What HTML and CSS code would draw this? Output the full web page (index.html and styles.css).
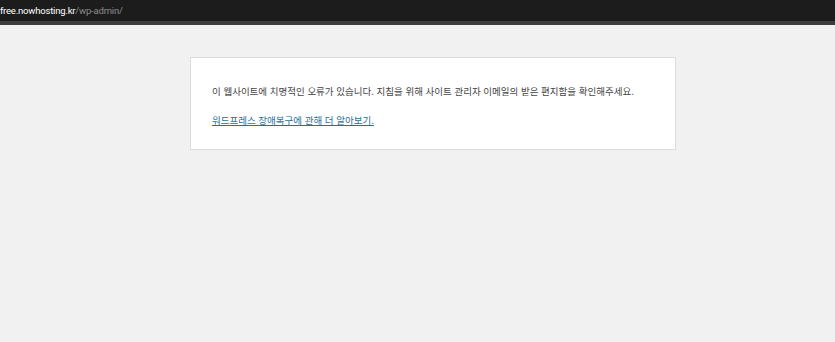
FILE: index.html
```html
<!DOCTYPE html>

<html lang="ko">
    <head>
        <meta charset="utf-8">

        <link rel="stylesheet" href="styles.css">
    </head>

    <body>
        <div class="top">
            <span class="host">free.nowhosting.kr</span><span class="path">/wp-admin/</span>
        </div>

        <div class="box">
            <p class="msg">이 웹사이트에 치명적인 오류가 있습니다. 지침을 위해 사이트 관리자 이메일의 받은 편지함을 확인해주세요.</p>

            <p class="msg"><a class="link" href="#">워드프레스 장애복구에 관해 더 알아보기.</a></p>
        </div>
    </body>
</html>
```

FILE: styles.css
```css
body
{
    margin: 0;
    background-color: #f1f1f1;
    font-family: "Noto Sans CJK KR", "Noto Sans", sans-serif;
}

.top
{
    height: 21px;
    line-height: 21px;
    background-color: #1c1c1c;
    border-bottom: 4px solid #3c3c3c;
    font-family: Roboto, sans-serif;
    font-size: 9.5px;
    letter-spacing: -0.2px;
}

.host
{
    color: #ffffff;
}

.path
{
    color: #8c8c8c;
}

.box
{
    width: 442px;
    margin: 32px 0 0 190px;
    padding: 15px 21px 18px 21px;
    background-color: #ffffff;
    border: 1px solid #dcdcdc;
}

.msg
{
    margin: 7px 0 0 0;
    font-size: 9.5px;
    line-height: 22px;
    color: #444444;
}

.link
{
    color: #2271a0;
}
```
